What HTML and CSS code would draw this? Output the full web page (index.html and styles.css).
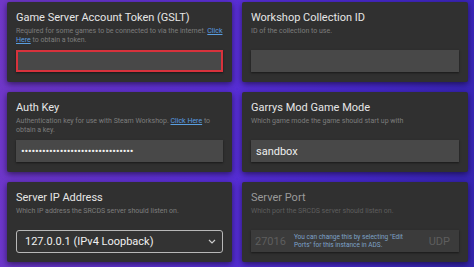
FILE: index.html
```html
<!DOCTYPE html>
<html lang="en">
<head>
    <meta charset="UTF-8">
    <meta name="viewport" content="width=device-width, initial-scale=1.0">
    <title>Garrys Mod Settings</title>
    <link rel="stylesheet" href="styles.css">
</head>
<body>
    <div class="settings">
        <!-- GSLT -->
        <div class="card">
            <div class="title">Game Server Account Token (GSLT)</div>
            <div class="desc">Required for some games to be connected to via the internet. <a href="#">Click Here</a> to obtain a token.</div>
            <div class="field invalid"></div>
        </div>

        <!-- Workshop -->
        <div class="card">
            <div class="title">Workshop Collection ID</div>
            <div class="desc">ID of the collection to use.</div>
            <div class="field"></div>
        </div>

        <!-- Auth key -->
        <div class="card">
            <div class="title">Auth Key</div>
            <div class="desc">Authentication key for use with Steam Workshop. <a href="#">Click Here</a> to obtain a key.</div>
            <div class="field dots">&bull;&bull;&bull;&bull;&bull;&bull;&bull;&bull;&bull;&bull;&bull;&bull;&bull;&bull;&bull;&bull;&bull;&bull;&bull;&bull;&bull;&bull;&bull;&bull;&bull;&bull;&bull;&bull;&bull;&bull;&bull;&bull;</div>
        </div>

        <!-- Game mode -->
        <div class="card">
            <div class="title">Garrys Mod Game Mode</div>
            <div class="desc">Which game mode the game should start up with</div>
            <div class="field">sandbox</div>
        </div>

        <!-- IP -->
        <div class="card">
            <div class="title">Server IP Address</div>
            <div class="desc">Which IP address the SRCDS server should listen on.</div>
            <div class="select">
                <span>127.0.0.1 (IPv4 Loopback)</span>
                <svg width="8" height="5" viewBox="0 0 8 5"><path d="M1 1 L4 4 L7 1" fill="none" stroke="#ccc" stroke-width="1.2"/></svg>
            </div>
        </div>

        <!-- Port -->
        <div class="card disabled">
            <div class="title">Server Port</div>
            <div class="desc">Which port the SRCDS server should listen on.</div>
            <div class="field port">
                <span class="num">27016</span>
                <span class="note">You can change this by selecting "Edit Ports" for this instance in ADS.</span>
                <span class="proto">UDP</span>
            </div>
        </div>
    </div>
</body>
</html>
```

FILE: styles.css
```css
/* General */
body {
    margin: 0;
    height: 267px;
    overflow: hidden;
    font-family: Roboto, "Liberation Sans", sans-serif;
    background: linear-gradient(100deg, #7138c8 0%, #5a2fd8 45%, #4628cc 75%, #3424b0 100%);
}

.settings {
    display: grid;
    grid-template-columns: 225px 226px;
    grid-auto-rows: 80px;
    gap: 10px;
    padding: 2px 6px 0 7px;
}

/* Cards */
.card {
    background-color: #303030;
    border-radius: 2px;
    box-shadow: 0 2px 6px rgba(0, 0, 0, 0.55);
    padding: 9px 9px 0 9px;
    box-sizing: border-box;
}

.title {
    font-size: 11px;
    line-height: 14px;
    color: #e6e6e6;
}

.desc {
    margin-top: 2px;
    height: 18px;
    font-size: 7px;
    line-height: 9px;
    color: #7d7d7d;
}

.desc a {
    color: #5a9ee0;
}

/* Inputs */
.field {
    margin-top: 5px;
    height: 22px;
    box-sizing: border-box;
    background-color: #484848;
    box-shadow: 0 1px 2px rgba(0, 0, 0, 0.5);
    padding: 0 5px;
    display: flex;
    align-items: center;
    font-size: 11px;
    color: #eee;
}

.field.invalid {
    border: 2px solid #d8323c;
}

.field.dots {
    font-size: 11px;
    letter-spacing: -0.2px;
}

.select {
    margin-top: 5px;
    height: 23px;
    box-sizing: border-box;
    border: 1px solid #b8b8b8;
    border-radius: 3px;
    background-color: #333;
    padding: 0 6px 0 8px;
    display: flex;
    align-items: center;
    justify-content: space-between;
    font-size: 11px;
    color: #f0f0f0;
}

/* Disabled port card */
.disabled .title {
    color: #9a9a9a;
}

.disabled .desc {
    color: #5e5e5e;
}

.field.port {
    background-color: #3b3b3b;
    gap: 8px;
    padding: 0 9px 0 4px;
}

.port .num,
.port .proto {
    color: #5e5e5e;
    font-size: 11px;
}

.port .note {
    flex: 1;
    font-size: 6.5px;
    line-height: 8px;
    color: #7ea2c8;
}
```
